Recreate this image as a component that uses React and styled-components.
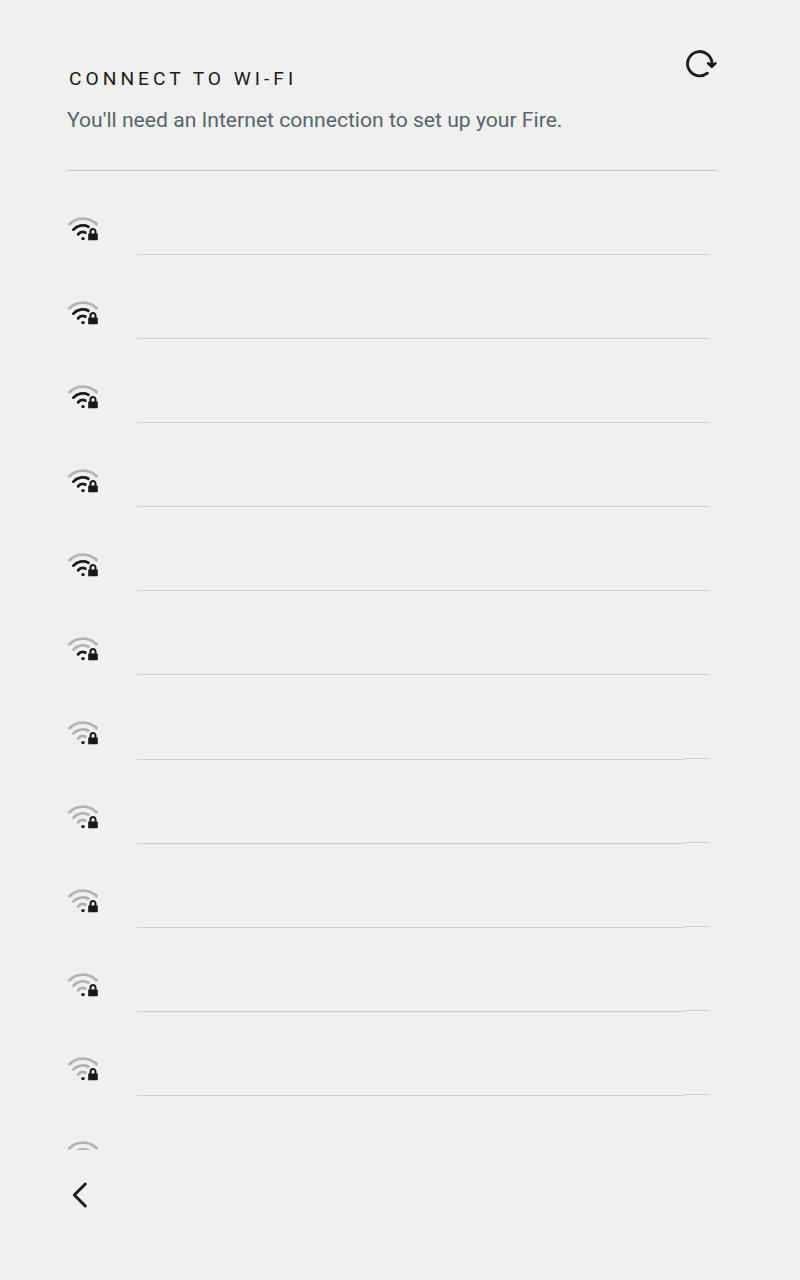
import React from "react";
import styled, { createGlobalStyle } from "styled-components";

const GlobalStyle = createGlobalStyle`
  * { box-sizing: border-box; }
  body { margin: 0; background: #f0f0ee; font-family: Roboto, "Liberation Sans", sans-serif; }
`;

const Screen = styled.main`
  height: 1280px;
  display: flex;
  flex-direction: column;
  overflow: hidden;
  background: #f0f0ee;
`;

const Header = styled.header`
  height: 171px;
  margin: 0 83px 0 67px;
  display: flex;
  justify-content: space-between;
  align-items: flex-start;
  border-bottom: 1px solid #c5c5c4;
`;

const Heading = styled.div`
  padding-top: 67px;
`;

const Title = styled.h1`
  margin: 0 0 0 2px;
  font-size: 19.2px;
  font-weight: 400;
  line-height: 24px;
  letter-spacing: 4px;
  color: #1a1a1a;
  white-space: nowrap;
`;

const Subtitle = styled.p`
  margin: 15px 0 0;
  font-size: 21.13px;
  line-height: 28px;
  color: #56656e;
  white-space: nowrap;
`;

const IconButton = styled.button`
  display: flex;
  padding: 0;
  border: 0;
  background: none;
  color: #1c1c1c;
`;

const RefreshButton = styled(IconButton)`
  margin-top: 48px;
`;

const NetworkList = styled.ul`
  height: 979px;
  margin: 0 91px 0 67px;
  padding: 0;
  list-style: none;
  overflow: hidden;
`;

const Network = styled.li`
  height: 84px;
  display: flex;
  gap: 38px;
`;

const Signal = styled.svg`
  flex: none;
  margin-top: 42px;
`;

const Details = styled.div`
  flex: 1;
  display: flex;
`;

const Name = styled.div`
  flex: 1;
  height: ${(p) => (p.$offset ? 85 : 84)}px;
  border-bottom: 1px solid #d0d0cf;
`;

const Status = styled.div`
  width: 24px;
  height: 84px;
  border-bottom: 1px solid #d0d0cf;
`;

const Footer = styled.footer`
  padding: 30px 0 0 67px;
`;

const DARK = "#1a1a1a";
const LIGHT = "#b3b3b2";

function WifiIcon({ level }) {
  return (
    <Signal width="32" height="32" viewBox="0 0 32 32" fill="none" strokeWidth="2.8" strokeLinecap="round">
      <path d="M2.4 11.3A19 19 0 0 1 29.6 11.3" stroke={LIGHT} />
      <path d="M6.4 16.6A12.6 12.6 0 0 1 21.4 13.7" stroke={level > 1 ? DARK : LIGHT} />
      <path d="M11.1 21.3A6 6 0 0 1 18.3 19.6" stroke={level > 0 ? DARK : LIGHT} />
      <circle cx="16" cy="25.6" r="1.7" fill={DARK} />
      <path d="M23.5 21V18.4A2.5 2.5 0 0 1 28.5 18.4V21" stroke={DARK} strokeWidth="2" />
      <rect x="21.2" y="20.4" width="9.6" height="6.9" rx="0.6" fill={DARK} />
    </Signal>
  );
}

const levels = [2, 2, 2, 2, 2, 1, 0, 0, 0, 0, 0, 0];

export default function App() {
  return (
    <>
      <GlobalStyle />
      <Screen>
        <Header>
          <Heading>
            <Title>CONNECT TO WI-FI</Title>
            <Subtitle>You'll need an Internet connection to set up your Fire.</Subtitle>
          </Heading>
          <RefreshButton aria-label="Refresh">
            <svg width="32" height="32" viewBox="0 0 32 32" fill="none" stroke="currentColor" strokeLinecap="round" strokeLinejoin="round">
              <path d="M22.4 25.2A12.2 12.2 0 1 1 26.9 16.2" strokeWidth="2.8" />
              <path d="M23 15.3L26.8 19L30.5 15.3L26.8 16.6Z" fill="currentColor" strokeWidth="2.4" />
            </svg>
          </RefreshButton>
        </Header>
        <NetworkList>
          {levels.map((level, i) => (
            <Network key={i}>
              <WifiIcon level={level} />
              <Details>
                <Name $offset={i > 5} />
                <Status />
              </Details>
            </Network>
          ))}
        </NetworkList>
        <Footer>
          <IconButton aria-label="Back">
            <svg width="28" height="30" viewBox="0 0 28 30" fill="none" stroke="currentColor" strokeWidth="3" strokeLinecap="round" strokeLinejoin="round">
              <path d="M18.3 4L7.3 15L18.3 26" />
            </svg>
          </IconButton>
        </Footer>
      </Screen>
    </>
  );
}
